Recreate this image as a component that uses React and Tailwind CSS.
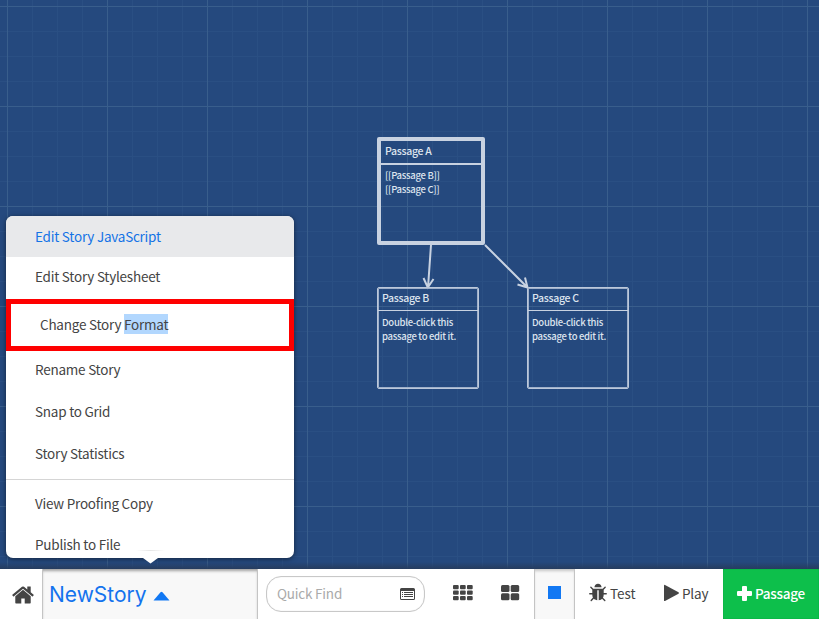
const faHome =
  'M1472 992v480q0 26-19 45t-45 19h-384v-384h-256v384h-384q-26 0-45-19t-19-45v-480q0-1 .5-3t.5-3l575-474 575 474q1 2 1 6zm223-69l-62 74q-8 9-21 11h-3q-13 0-21-7l-692-577-692 577q-12 8-24 7-13-2-21-11l-62-74q-8-10-7-23.5t11-21.5l719-599q32-26 76-26t76 26l244 204v-195q0-14 9-23t23-9h192q14 0 23 9t9 23v408l219 182q10 8 11 21.5t-7 23.5z';
const faBug =
  'M1696 960q0 26-19 45t-45 19h-224q0 171-67 290l208 209q19 19 19 45t-19 45q-18 19-45 19t-45-19l-198-197q-5 5-15 13t-42 28.5-65 36.5-82 29-97 13v-896h-128v896q-51 0-101.5-13.5t-87-33-66-39-43.5-32.5l-15-14-183 207q-20 21-48 21-24 0-43-16-19-18-20.5-44.5t15.5-46.5l202-227q-58-114-58-274h-224q-26 0-45-19t-19-45 19-45 45-19h224v-294l-173-173q-19-19-19-45t19-45 45-19 45 19l173 173h844l173-173q19-19 45-19t45 19 19 45-19 45l-173 173v294h224q26 0 45 19t19 45zm-480-576h-640q0-133 93.5-226.5t226.5-93.5 226.5 93.5 93.5 226.5z';

function Grid() {
  return (
    <svg className="absolute inset-0 h-full w-full">
      <defs>
        <pattern id="grid" x="7" y="6" width="100" height="100" patternUnits="userSpaceOnUse">
          <path d="M25.5 0V100M50.5 0V100M75.5 0V100M0 25.5H100M0 50.5H100M0 75.5H100" stroke="#2a4f83" />
          <path d="M.5 0V100M0 .5H100" stroke="#395e8c" />
        </pattern>
      </defs>
      <rect width="100%" height="100%" fill="url(#grid)" />
    </svg>
  );
}

function Links() {
  return (
    <svg className="absolute inset-0 h-full w-full" fill="none" stroke="#c8d2e1" strokeWidth="2">
      <path d="M431 245L428 287.500M423.500 278L427.800 287.500L433.500 279" />
      <path d="M485 245L527.500 287.500M517.500 284.500L527.500 287.500L525 277.500" />
    </svg>
  );
}

function Passage({ title, lines, className, titleClass, bodyClass }) {
  return (
    <div className={`absolute flex flex-col rounded-[2px] text-[#dde4ee] ${className}`}>
      <div className={`border-[#c8d2e1] text-[10.500px] leading-[14px] font-medium tracking-[-0.3px] ${titleClass}`}>{title}</div>
      <div className={`text-[9.500px] leading-[14px] font-medium tracking-[-0.3px] whitespace-nowrap ${bodyClass}`}>
        {lines.map((l) => (
          <div key={l}>{l}</div>
        ))}
      </div>
    </div>
  );
}

function Item({ children }) {
  return <div className="flex h-[42px] items-center pb-[3px] pl-[29px]">{children}</div>;
}

function Menu() {
  return (
    <div className="absolute top-[216px] left-[6px] h-[342px] w-[288px] rounded-[7px] bg-white text-[13.500px] leading-5 tracking-[-0.23px] text-[#444] shadow-[0_1px_5px_rgba(0,0,0,0.5)]">
      <div className="h-full overflow-hidden rounded-[7px]">
        <div className="flex h-[41px] items-center bg-[#e8e9eb] pb-[2px] pl-[29px] text-[#1473e6]">Edit Story JavaScript</div>
        <div className="flex h-[42px] items-center pb-[4px] pl-[29px]">Edit Story Stylesheet</div>
        <div className="flex h-[52px] items-center border-[5px] border-[#fe0000] pb-[3px] pl-[29px]">
          <span className="whitespace-pre">Change Story </span>
          <span className="bg-[#b2d7fe]">Format</span>
        </div>
        <div className="-mt-[2px] border-b border-[#d5d5d5] pb-1">
          <Item>Rename Story</Item>
          <Item>Snap to Grid</Item>
          <Item>Story Statistics</Item>
        </div>
        <div className="pt-[3px]">
          <Item>View Proofing Copy</Item>
          <div className="flex h-10 items-center pb-[3px] pl-[29px]">Publish to File</div>
        </div>
      </div>
      <div className="absolute bottom-[7px] left-[130px] h-px w-[29px] bg-gradient-to-r from-white via-[#e6e6e6] to-white" />
      <svg className="absolute top-full left-[137px]" width="15" height="6">
        <path d="M0 0H15L7.500 5.500z" fill="#fff" />
      </svg>
    </div>
  );
}

function Toolbar() {
  return (
    <div className="flex h-[50px] items-stretch bg-white text-[13.500px] leading-5 tracking-[-0.2px] text-[#444]">
      <div className="flex w-[42px] items-center pt-[2px] pl-[11px]">
        <svg width="24" height="24" viewBox="0 0 1792 1792" fill="#444"><path d={faHome} /></svg>
      </div>
      <div className="flex w-[216px] items-center border-x border-[#c4c4c4] bg-[#f8f8f8] pl-[6px] text-[#1473ee] shadow-[inset_0_3px_3px_-1px_rgba(0,0,0,0.35)]">
        <span className="mt-[2px] font-['Inter',sans-serif] text-[21px] leading-6 font-normal tracking-normal">NewStory</span>
        <svg className="mt-[4px] ml-[6px]" width="17" height="10"><path d="M.5 9.500L7.500 1.200Q8.500 .2 9.500 1.200L16.500 9.500z" fill="#1278f3" /></svg>
      </div>
      <div className="flex w-[276px] items-center">
        <div className="ml-2 flex h-9 w-[159px] items-center justify-between rounded-[15px] border border-[#c8c8c8] pr-[9px] pl-[10px] text-[#aaa] shadow-[inset_0_0_1px_#ccc]">
          <span className="pb-[3px]">Quick Find</span>
          <svg width="15" height="12" fill="#444">
            <path fillRule="evenodd" d="M1.500 0H13.500Q15 0 15 1.500V10.500Q15 12 13.500 12H1.500Q0 12 0 10.500V1.500Q0 0 1.500 0zM1 3V10.500Q1 11 1.500 11H13.500Q14 11 14 10.500V3z" />
            <path d="M2 4h1v1h-1zM4 4h9v1h-9zM2 6h1v1h-1zM4 6h9v1h-9zM2 8h1v1h-1zM4 8h9v1h-9z" />
          </svg>
        </div>
        <svg className="mb-[3px] ml-[28px]" width="20" height="16" fill="#444">
          {[0, 5.5, 11].map((y) =>
            [0, 7, 14].map((x) => <rect key={`${x}-${y}`} x={x} y={y} width="5.700" height="4.300" rx="1" />)
          )}
        </svg>
        <svg className="mb-[3px] ml-[28px]" width="19" height="16" fill="#444">
          {[0, 8.2].map((y) =>
            [0, 9.7].map((x) => <rect key={`${x}-${y}`} x={x} y={y} width="8.500" height="7" rx="1.500" />)
          )}
        </svg>
      </div>
      <div className="flex w-[41px] items-center border-x border-[#c4c4c4] bg-[#f8f8f8] pl-[13px] shadow-[inset_0_3px_3px_-1px_rgba(0,0,0,0.2)]">
        <div className="mb-[3px] h-[13px] w-[13px] bg-[#1278f3]" />
      </div>
      <div className="flex w-[74px] items-center pb-[2px] pl-[13px]">
        <svg width="20" height="20" viewBox="0 0 1792 1792" fill="#444"><path d={faBug} /></svg>
        <span className="mb-px ml-[2px] tracking-normal">Test</span>
      </div>
      <div className="flex w-[74px] items-center pb-[2px] pl-[15px]">
        <svg width="16" height="18" fill="#444"><path d="M0 1.500Q0 .5 1 1L14.500 8.300Q15.500 9 14.500 9.700L1 17Q0 17.400 0 16.500z" /></svg>
        <span className="mb-px ml-[2px]">Play</span>
      </div>
      <div className="flex w-24 items-center bg-[#0dbf4b] pb-[2px] pl-[14px] font-medium text-white shadow-[inset_0_0_1px_#087a30]">
        <svg width="15" height="15" fill="#fff"><path d="M6 0H9Q10 0 10 1V5H14Q15 5 15 6V9Q15 10 14 10H10V14Q10 15 9 15H6Q5 15 5 14V10H1Q0 10 0 9V6Q0 5 1 5H5V1Q5 0 6 0z" /></svg>
        <span className="mb-px ml-[3px] tracking-[-0.3px]">Passage</span>
      </div>
    </div>
  );
}

export default function App() {
  return (
    <div className="flex h-[619px] w-[819px] flex-col overflow-hidden font-['Noto_Sans_CJK_SC',sans-serif]">
      <div className="relative h-[569px] bg-[#25497e]">
        <Grid />
        <div className="absolute inset-x-0 bottom-0 h-[7px] bg-gradient-to-b from-transparent to-[#263c5e]" />
        <Links />
        <Passage
          title="Passage A"
          lines={['[[Passage B]]', '[[Passage C]]']}
          className="top-[137px] left-[377px] h-[108px] w-[108px] border-4 border-[#c8d2e1]"
          titleClass="h-[24px] border-b-2 px-1 pt-[3px]"
          bodyClass="px-1 pt-[3px]"
        />
        <Passage
          title="Passage B"
          lines={['Double-click this', 'passage to edit it.']}
          className="top-[287px] left-[377px] h-[102px] w-[102px] border border-[#bcc8da] shadow-[inset_0_0_0_1px_#9fb0ca]"
          titleClass="h-[23px] border-b px-1 pt-[3px]"
          bodyClass="px-1 pt-1"
        />
        <Passage
          title="Passage C"
          lines={['Double-click this', 'passage to edit it.']}
          className="top-[287px] left-[527px] h-[102px] w-[102px] border border-[#bcc8da] shadow-[inset_0_0_0_1px_#9fb0ca]"
          titleClass="h-[23px] border-b px-1 pt-[3px]"
          bodyClass="px-1 pt-1"
        />
        <Menu />
      </div>
      <Toolbar />
    </div>
  );
}
